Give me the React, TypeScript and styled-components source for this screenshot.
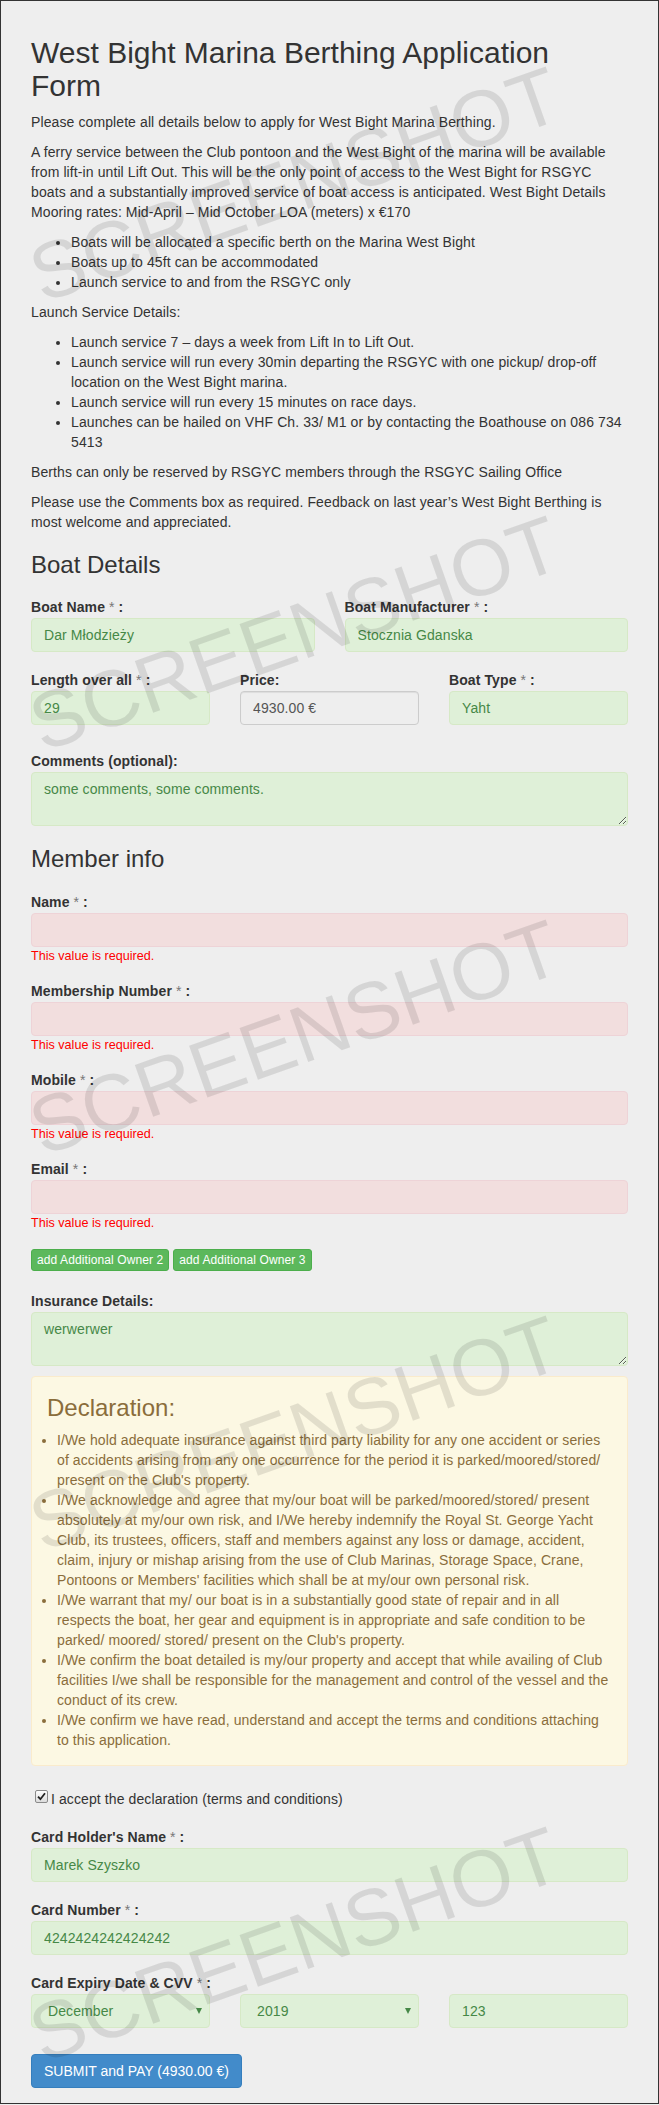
import React from 'react';
import styled, { createGlobalStyle } from 'styled-components';

const GlobalStyle = createGlobalStyle`
  html, body {
    margin: 0;
    padding: 0;
  }
  body {
    font-family: 'Liberation Sans', Arial, Helvetica, sans-serif;
    font-size: 14px;
    line-height: 20px;
    letter-spacing: 0.1px;
    color: #333;
    background: #eee;
  }
  * {
    box-sizing: border-box;
  }
`;

type FieldState = 'ok' | 'error' | 'plain';

const Page = styled.div`
  position: relative;
  overflow: hidden;
  border: 1px solid #333;
  background: #eee;
  padding: 15px 30px;
`;

const Title = styled.h2`
  font-size: 30px;
  line-height: 33px;
  font-weight: 500;
  letter-spacing: 0;
  margin: 20px 0 10px;
  color: #333;
`;

const Text = styled.p`
  margin: 0 0 10px;
`;

const BulletList = styled.ul`
  margin: 0 0 10px;
  padding-left: 40px;
`;

const SectionTitle = styled.h3`
  font-size: 24px;
  line-height: 26.4px;
  font-weight: 500;
  letter-spacing: 0;
  margin: 20px 0 19px;
  color: #333;
`;

const Row = styled.div<{ $cols?: number; $mb?: number }>`
  display: grid;
  grid-template-columns: repeat(${(p) => p.$cols ?? 1}, minmax(0, 1fr));
  column-gap: 30px;
  margin-bottom: ${(p) => p.$mb ?? 18}px;
`;

const Label = styled.label`
  display: block;
  font-weight: bold;
  line-height: 20px;
  margin-bottom: 1px;
  color: #333;
`;

const Req = styled.span`
  font-weight: normal;
  color: #777;
`;

const fieldColors = (state: FieldState) => {
  if (state === 'ok') return 'background: #dff0d8; border-color: #d6e9c6; color: #468847;';
  if (state === 'error') return 'background: #f2dede; border-color: #eed3d7; color: #b94a48;';
  return 'background: #eee; border-color: #ccc; color: #555; box-shadow: inset 0 1px 1px rgba(0,0,0,0.075);';
};

const Input = styled.input<{ $state: FieldState }>`
  display: block;
  width: 100%;
  height: 34px;
  padding: 6px 12px;
  font-family: inherit;
  font-size: 14px;
  line-height: 20px;
  letter-spacing: 0.1px;
  border: 1px solid;
  border-radius: 4px;
  outline: none;
  ${(p) => fieldColors(p.$state)}
`;

const TextArea = styled.textarea<{ $state: FieldState }>`
  display: block;
  width: 100%;
  height: 54px;
  padding: 6px 12px;
  font-family: inherit;
  font-size: 14px;
  line-height: 20px;
  letter-spacing: 0.1px;
  border: 1px solid;
  border-radius: 4px;
  outline: none;
  resize: vertical;
  ${(p) => fieldColors(p.$state)}
`;

const SelectBox = styled.div`
  display: flex;
  align-items: center;
  height: 34px;
  border: 1px solid #d6e9c6;
  background: #dff0d8;
  border-radius: 4px;
`;

const Select = styled.select`
  appearance: none;
  flex: 1;
  min-width: 0;
  height: 100%;
  border: 0;
  background: transparent;
  padding: 0 0 0 16px;
  font-family: inherit;
  font-size: 14px;
  letter-spacing: 0.1px;
  color: #468847;
  outline: none;
`;

const Caret = styled.span`
  width: 0;
  height: 0;
  border-left: 3px solid transparent;
  border-right: 3px solid transparent;
  border-top: 6px solid #468847;
  margin-right: 7px;
`;

const ErrorText = styled.div`
  font-size: 12.6px;
  line-height: 14px;
  letter-spacing: 0;
  margin-top: 2px;
  color: #f00;
`;

const ButtonRow = styled.div`
  display: flex;
  gap: 4px;
  margin: 19px 0 20px;
`;

const SmallButton = styled.button`
  font-family: inherit;
  font-size: 12px;
  line-height: 18px;
  letter-spacing: 0.1px;
  padding: 1px 5px;
  border: 1px solid #4cae4c;
  background: #5cb85c;
  color: #fff;
  border-radius: 3px;
  cursor: pointer;
`;

const Declaration = styled.div`
  background: #fcf8e3;
  border: 1px solid #faebcc;
  border-radius: 4px;
  padding: 15px;
  color: #8a6d3b;
`;

const DeclarationTitle = styled.h3`
  font-size: 24px;
  line-height: 26.4px;
  font-weight: 500;
  letter-spacing: 0;
  margin: 3px 0 9px;
`;

const DeclarationList = styled.ul`
  margin: 0;
  padding-left: 10px;
`;

const CheckRow = styled.label`
  display: flex;
  align-items: flex-start;
  margin: 23px 0 18px;
  line-height: 20px;
  color: #333;
  cursor: pointer;
`;

const CheckBox = styled.span`
  display: flex;
  align-items: center;
  justify-content: center;
  width: 13px;
  height: 13px;
  margin: 1px 3px 0 4px;
  border: 1px solid #8a8a8a;
  border-radius: 2px;
  background: linear-gradient(#fdfdfd, #dcdcdc);
`;

const SubmitButton = styled.button`
  font-family: inherit;
  font-size: 14px;
  line-height: 20px;
  letter-spacing: 0;
  padding: 6px 12px;
  border: 1px solid #357ebd;
  background: #428bca;
  color: #fff;
  border-radius: 4px;
  cursor: pointer;
`;

const Mark = styled.div<{ $top: number }>`
  position: absolute;
  left: 294px;
  top: ${(p) => p.$top}px;
  transform: translate(-50%, -50%) rotate(-19.5deg);
  font-size: 80px;
  line-height: 1;
  letter-spacing: 0;
  color: rgba(0, 0, 0, 0.1);
  white-space: nowrap;
  pointer-events: none;
`;

const FieldLabel: React.FC<{ text: string; required?: boolean }> = ({ text, required }) => (
  <Label>
    {text}
    {required ? (
      <>
        {' '}
        <Req>*</Req> :
      </>
    ) : (
      ':'
    )}
  </Label>
);

const declarations = [
  "I/We hold adequate insurance against third party liability for any one accident or series of accidents arising from any one occurrence for the period it is parked/moored/stored/ present on the Club's property.",
  "I/We acknowledge and agree that my/our boat will be parked/moored/stored/ present absolutely at my/our own risk, and I/We hereby indemnify the Royal St. George Yacht Club, its trustees, officers, staff and members against any loss or damage, accident, claim, injury or mishap arising from the use of Club Marinas, Storage Space, Crane, Pontoons or Members' facilities which shall be at my/our own personal risk.",
  "I/We warrant that my/ our boat is in a substantially good state of repair and in all respects the boat, her gear and equipment is in appropriate and safe condition to be parked/ moored/ stored/ present on the Club's property.",
  'I/We confirm the boat detailed is my/our property and accept that while availing of Club facilities I/we shall be responsible for the management and control of the vessel and the conduct of its crew.',
  'I/We confirm we have read, understand and accept the terms and conditions attaching to this application.',
];

const memberFields = ['Name', 'Membership Number', 'Mobile', 'Email'];

const watermarks = [184, 633, 1037, 1433, 1944];

const App: React.FC = () => {
  return (
    <Page>
      <GlobalStyle />
      <Title>
        West Bight Marina Berthing Application
        <br />
        Form
      </Title>
      <Text>Please complete all details below to apply for West Bight Marina Berthing.</Text>
      <Text>
        A ferry service between the Club pontoon and the West Bight of the marina will be available
        from lift-in until Lift Out. This will be the only point of access to the West Bight for RSGYC
        boats and a substantially improved service of boat access is anticipated. West Bight Details
        Mooring rates: Mid-April – Mid October LOA (meters) x €170
      </Text>
      <BulletList>
        <li>Boats will be allocated a specific berth on the Marina West Bight</li>
        <li>Boats up to 45ft can be accommodated</li>
        <li>Launch service to and from the RSGYC only</li>
      </BulletList>
      <Text>Launch Service Details:</Text>
      <BulletList>
        <li>Launch service 7 – days a week from Lift In to Lift Out.</li>
        <li>
          Launch service will run every 30min departing the RSGYC with one pickup/ drop-off location
          on the West Bight marina.
        </li>
        <li>Launch service will run every 15 minutes on race days.</li>
        <li>Launches can be hailed on VHF Ch. 33/ M1 or by contacting the Boathouse on 086 734 5413</li>
      </BulletList>
      <Text>Berths can only be reserved by RSGYC members through the RSGYC Sailing Office</Text>
      <Text>
        Please use the Comments box as required. Feedback on last year’s West Bight Berthing is most
        welcome and appreciated.
      </Text>

      <SectionTitle>Boat Details</SectionTitle>
      <Row $cols={2}>
        <div>
          <FieldLabel text="Boat Name" required />
          <Input $state="ok" defaultValue="Dar Młodzieży" />
        </div>
        <div>
          <FieldLabel text="Boat Manufacturer" required />
          <Input $state="ok" defaultValue="Stocznia Gdanska" />
        </div>
      </Row>
      <Row $cols={3} $mb={26}>
        <div>
          <FieldLabel text="Length over all" required />
          <Input $state="ok" defaultValue="29" />
        </div>
        <div>
          <FieldLabel text="Price" />
          <Input $state="plain" readOnly defaultValue="4930.00 €" />
        </div>
        <div>
          <FieldLabel text="Boat Type" required />
          <Input $state="ok" defaultValue="Yaht" />
        </div>
      </Row>
      <Row>
        <div>
          <FieldLabel text="Comments (optional)" />
          <TextArea $state="ok" defaultValue="some comments, some comments." />
        </div>
      </Row>

      <SectionTitle>Member info</SectionTitle>
      {memberFields.map((name) => (
        <Row key={name}>
          <div>
            <FieldLabel text={name} required />
            <Input $state="error" />
            <ErrorText>This value is required.</ErrorText>
          </div>
        </Row>
      ))}
      <ButtonRow>
        <SmallButton type="button">add Additional Owner 2</SmallButton>
        <SmallButton type="button">add Additional Owner 3</SmallButton>
      </ButtonRow>
      <Row $mb={10}>
        <div>
          <FieldLabel text="Insurance Details" />
          <TextArea $state="ok" defaultValue="werwerwer" />
        </div>
      </Row>

      <Declaration>
        <DeclarationTitle>Declaration:</DeclarationTitle>
        <DeclarationList>
          {declarations.map((d, i) => (
            <li key={i}>{d}</li>
          ))}
        </DeclarationList>
      </Declaration>

      <CheckRow>
        <CheckBox>
          <svg width="9" height="9" viewBox="0 0 9 9">
            <path d="M1 4.6 L3.4 7.2 L8 1.2" fill="none" stroke="#222" strokeWidth="1.8" />
          </svg>
        </CheckBox>
        <span>I accept the declaration (terms and conditions)</span>
      </CheckRow>

      <Row>
        <div>
          <FieldLabel text="Card Holder's Name" required />
          <Input $state="ok" defaultValue="Marek Szyszko" />
        </div>
      </Row>
      <Row>
        <div>
          <FieldLabel text="Card Number" required />
          <Input $state="ok" defaultValue="4242424242424242" />
        </div>
      </Row>
      <div>
        <FieldLabel text="Card Expiry Date & CVV" required />
        <Row $cols={3} $mb={26}>
          <SelectBox>
            <Select defaultValue="12">
              <option value="12">December</option>
            </Select>
            <Caret />
          </SelectBox>
          <SelectBox>
            <Select defaultValue="2019">
              <option value="2019">2019</option>
            </Select>
            <Caret />
          </SelectBox>
          <Input $state="ok" defaultValue="123" />
        </Row>
      </div>
      <SubmitButton type="button">SUBMIT and PAY (4930.00 €)</SubmitButton>

      {watermarks.map((top) => (
        <Mark key={top} $top={top}>
          SCREENSHOT
        </Mark>
      ))}
    </Page>
  );
};

export default App;
